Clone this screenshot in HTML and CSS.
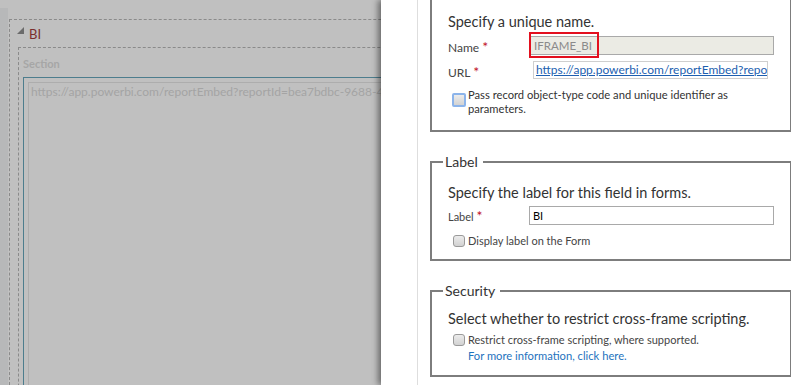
FILE: index.html
```html
<!DOCTYPE html>
<html lang="en">
<head>
  <meta charset="UTF-8">
  <title>IFRAME Properties</title>
  <link rel="stylesheet" href="styles.css">
</head>
<body>

  <!-- Form designer (dimmed behind the dialog) -->
  <div class="designer">
    <div class="rail"></div>
    <div class="tab">
      <div class="tab-head">
        <span class="tab-arrow"></span>
        <span class="tab-title">BI</span>
      </div>
      <div class="section">
        <div class="section-title">Section</div>
        <div class="iframe-cell">
          <div class="iframe-box">https://app.powerbi.com/reportEmbed?reportId=bea7bdbc-9688-4603-a1b2-55d0c3e1f7aa</div>
        </div>
      </div>
    </div>
  </div>

  <!-- Properties dialog -->
  <div class="dialog">
    <div class="gutter"></div>
    <div class="content">

      <div class="group group-first">
        <p class="intro">Specify a unique name.</p>
        <div class="row">
          <label class="row-label" for="name">Name <span class="req">*</span></label>
          <div class="highlight-wrap">
            <input class="field field-disabled" id="name" type="text" value="IFRAME_BI" disabled>
            <span class="highlight"></span>
          </div>
        </div>
        <div class="row row-url">
          <label class="row-label" for="url">URL <span class="req">*</span></label>
          <div class="field field-url" id="url"><a href="#">https://app.powerbi.com/reportEmbed?reportId=bea7bdbc-9688-4603</a></div>
        </div>
        <div class="check-row check-row-big">
          <input class="check check-focus" type="checkbox">
          <span>Pass record object-type code and unique identifier as<br>parameters.</span>
        </div>
      </div>

      <fieldset class="group group-label">
        <legend>Label</legend>
        <p class="intro">Specify the label for this field in forms.</p>
        <div class="row row-small">
          <label class="row-label small" for="label">Label <span class="req">*</span></label>
          <input class="field field-small" id="label" type="text" value="BI">
        </div>
        <div class="check-row">
          <input class="check" type="checkbox">
          <span>Display label on the Form</span>
        </div>
      </fieldset>

      <fieldset class="group group-security">
        <legend>Security</legend>
        <p class="intro">Select whether to restrict cross-frame scripting.</p>
        <div class="check-row check-row-link">
          <input class="check" type="checkbox">
          <span>Restrict cross-frame scripting, where supported.<br>
            <a class="more" href="#">For more information, click here.</a></span>
        </div>
      </fieldset>

    </div>
  </div>

</body>
</html>
```

FILE: styles.css
```css
body {
  margin: 0;
  width: 791px;
  height: 385px;
  overflow: hidden;
  display: flex;
  font-family: 'Lato', sans-serif;
  color: #333;
  background-color: white;
}

/* Designer side */
.designer {
  width: 381px;
  flex-shrink: 0;
  display: flex;
  background-color: #c0c0c0;
  overflow: hidden;
}

.rail {
  width: 8px;
  flex-shrink: 0;
  margin-top: 8px;
  background-color: #b7b8b9;
}

.tab {
  flex: 1;
  margin: 19px -20px 0 1px;
  padding: 6px 0 0 8px;
  border: 1px dashed #8a8a8a;
  border-bottom: none;
}

.tab-head {
  display: flex;
  align-items: flex-start;
  gap: 5px;
  height: 14px;
  margin: 0 0 7px -1px;
}

.tab-arrow {
  width: 0;
  height: 0;
  margin-top: 1px;
  border-left: 7px solid transparent;
  border-bottom: 7px solid #6b6b6b;
}

.tab-title {
  font-size: 13px;
  line-height: 14px;
  margin-top: 1px;
  color: #7b2e2e;
}

.section {
  border: 1px dashed #8a8a8a;
  border-bottom: none;
  height: 400px;
  padding: 9px 0 0 4px;
}

.section-title {
  font-size: 11px;
  line-height: 13px;
  font-weight: bold;
  color: #a6a6a6;
  height: 20px;
}

.iframe-cell {
  border: 1px solid #4d7d8d;
  border-right: none;
  padding: 4px 0 0 4px;
  height: 400px;
}

.iframe-box {
  border: 1px solid #adadad;
  border-right: none;
  height: 400px;
  padding: 1px 2px;
  font-size: 12px;
  color: #a4a4a4;
  white-space: nowrap;
  overflow: hidden;
}

/* Dialog side */
.dialog {
  flex: 1;
  display: flex;
  background-color: white;
  box-shadow: -3px 0 6px rgba(0, 0, 0, 0.45);
}

.gutter {
  width: 36px;
  border-right: 1px solid #dedede;
}

.content {
  flex: 1;
  padding: 0 5px 0 12px;
}

.group {
  margin: 0 0 22px;
  padding: 13px 16px 12px;
  border: 2px solid #7d7d7d;
  min-width: 0;
}

.group-first {
  border-top: none;
  padding-top: 12px;
  padding-bottom: 14px;
  margin-bottom: 22px;
}

.group-security {
  padding-top: 10px;
  padding-bottom: 11px;
}

legend {
  margin-left: -5px;
  padding: 0 5px 0 2px;
  font-size: 14px;
  line-height: 16px;
  color: #333;
}

.intro {
  margin: 0 0 3px;
  font-size: 14.5px;
  line-height: 20px;
}

.group-first .intro {
  margin-bottom: 4px;
}

.row {
  display: grid;
  grid-template-columns: 82px 1fr;
  align-items: end;
  margin-bottom: 6px;
}

.row-label {
  font-size: 12px;
  line-height: 14px;
  color: #444;
}

.row-url .row-label {
  margin-bottom: -1px;
}

.row-label.small {
  font-size: 11px;
  margin-bottom: 1px;
}

.req {
  color: #c1121f;
  font-size: 14px;
}

.highlight-wrap {
  position: relative;
}

.field {
  display: block;
  box-sizing: border-box;
  width: 100%;
  height: 19px;
  margin: 0;
  padding: 0 3px;
  border: 1px solid #a9a9a9;
  font-family: inherit;
  font-size: 11.5px;
}

.field-disabled {
  background-color: #ebebe4;
  color: #8a8a8a;
}

.highlight {
  position: absolute;
  left: -1px;
  top: -4px;
  width: 70px;
  height: 26px;
  box-sizing: border-box;
  border: 2px solid #e3101e;
}

.row-url .field-url {
  width: 235px;
  margin-left: 3px;
  height: 18px;
  padding-left: 2px;
  border-color: #cfcfcf;
  overflow: hidden;
  white-space: nowrap;
  line-height: 16px;
  font-size: 12px;
}

.field-url a {
  color: #1d5fb0;
}

.row-small {
  margin-bottom: 9px;
}

.field-small {
  font-size: 11px;
  width: 245px;
  margin-left: -1px;
}

.check-row {
  display: flex;
  gap: 3px;
  font-size: 11px;
  line-height: 13px;
  color: #444;
}

.check-row-big {
  gap: 2px;
  margin-top: 9px;
  font-size: 11.2px;
  line-height: 14px;
  color: #333;
}

.check-row-link {
  line-height: 16px;
}

.check {
  appearance: none;
  flex-shrink: 0;
  width: 12px;
  height: 12px;
  margin: 1px 0 0 5px;
  border: 1px solid #9a9a9a;
  border-radius: 3px;
  background: linear-gradient(#ececec, #d2d2d2);
}

.check-row-link .check {
  margin-top: 2px;
}

.check-focus {
  width: 14px;
  height: 14px;
  margin: 5px 0 0 4px;
  border: 2px solid #8cb4ea;
  border-radius: 2px;
}

.more {
  color: #1e73be;
  text-decoration: none;
  font-size: 11.2px;
}
```
